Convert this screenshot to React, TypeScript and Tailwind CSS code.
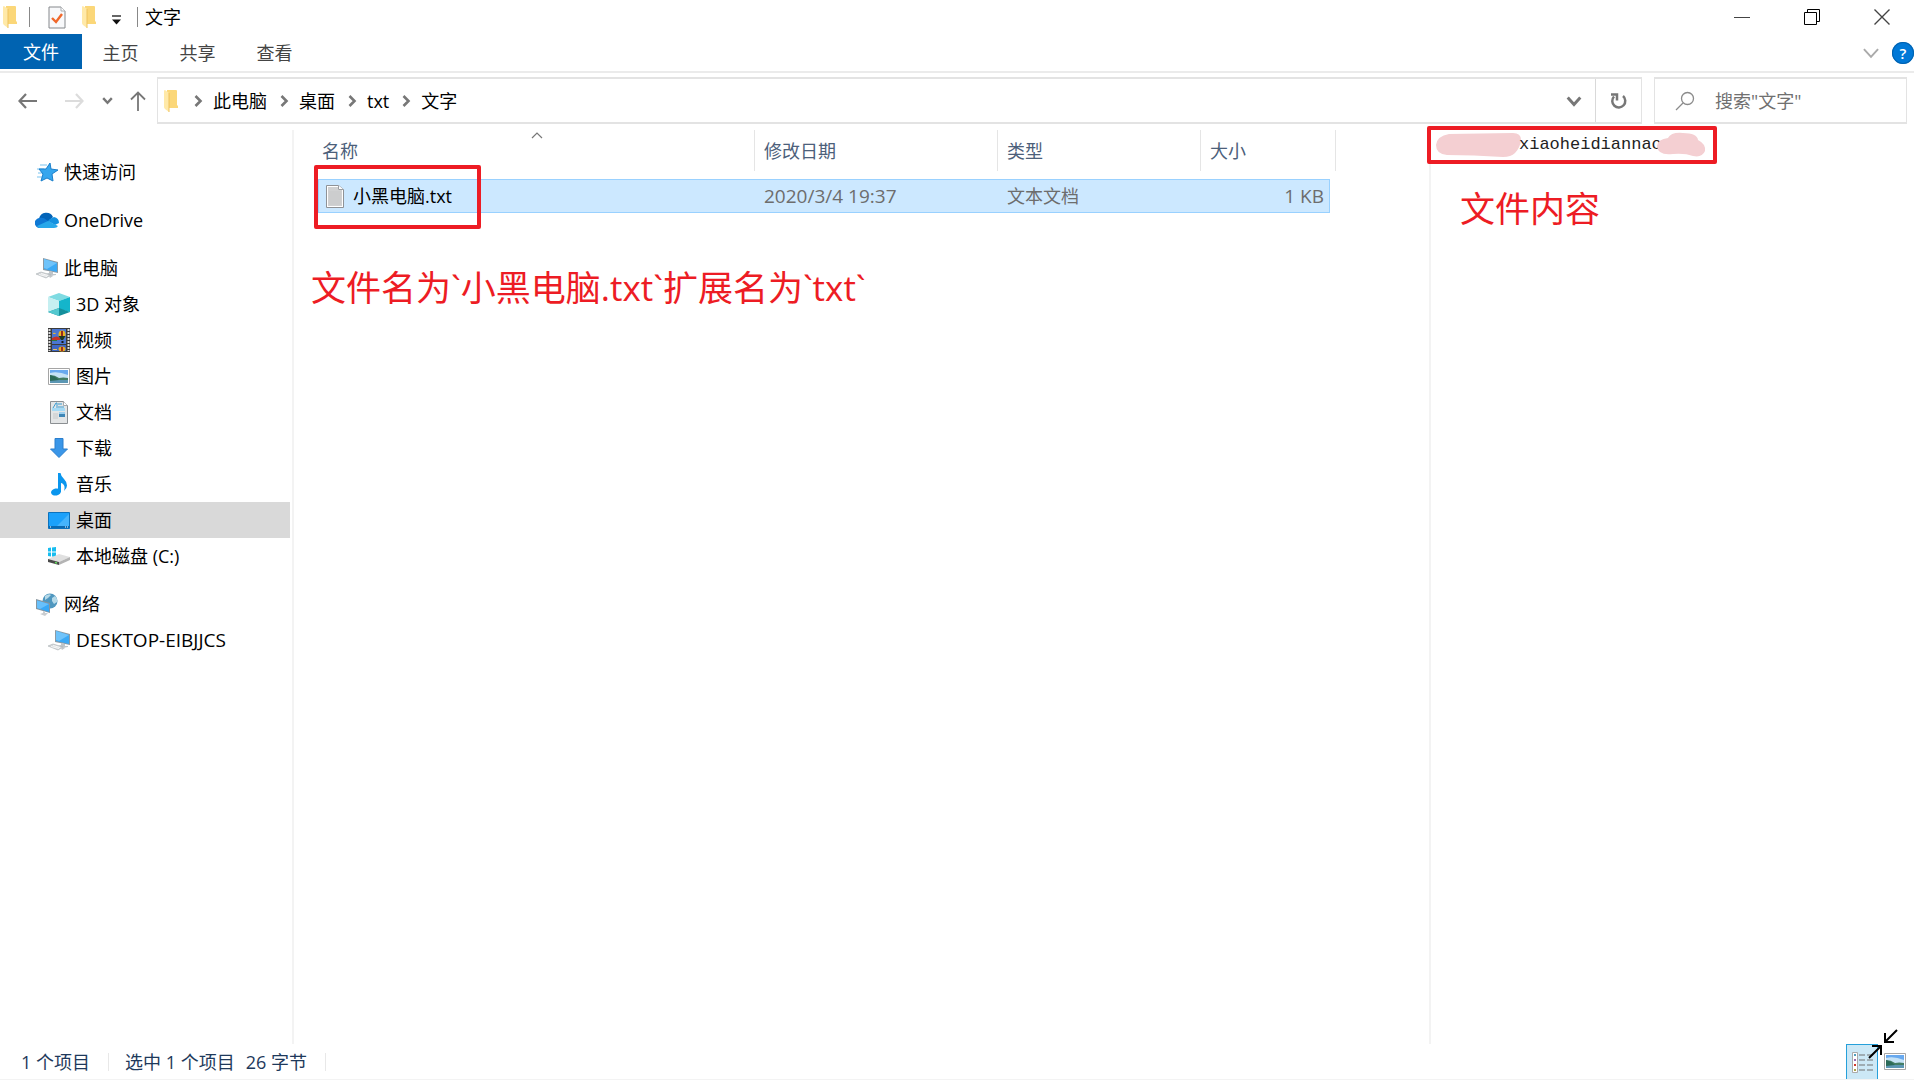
import type { ReactNode } from "react";

const LINE = "fill-none stroke-current";

function FolderIcon() {
  return (
    <svg width="16" height="24" viewBox="0 0 16 24" aria-hidden="true">
      <path d="M4 1h9q1 0 1 1v14l1 1v2H4z" fill="#fbd779" />
      <path d="M1 2q0-1 1-1l4 3v19l-4-3q-1-1-1-2z" fill="#ffe9a8" />
      <path d="M6 4v19" stroke="#eec25e" strokeWidth="1" />
    </svg>
  );
}

function CheckDocIcon() {
  return (
    <svg width="18" height="23" viewBox="0 0 18 23" aria-hidden="true">
      <path d="M1 1h12l4 4v17H1z" fill="#f8f9fb" stroke="#85888c" />
      <path d="M13 1v4h4" fill="#fff" stroke="#a9acb0" />
      <path d="M4 12l4 4 6-8" fill="none" stroke="#f0682b" strokeWidth="2.4" />
    </svg>
  );
}

function StarIcon() {
  return (
    <svg width="24" height="24" viewBox="0 0 24 24" aria-hidden="true">
      <path d="M5 5h7M2 9h7M3 13h6M2 17h6" stroke="#a6d8f5" strokeWidth="1.5" />
      <path d="M15 3l1 6 7 1-6 4 1 7-6-3-6 3 2-7-4-5h7z" fill="#35a6ee" stroke="#1b7fcb" />
    </svg>
  );
}

function CloudIcon() {
  return (
    <svg width="24" height="17" viewBox="0 0 24 17" aria-hidden="true">
      <path d="M5 16a5 5 0 0 1-1-9.500A7.500 7.500 0 0 1 18 5l-6 6z" fill="#0364b8" />
      <path d="M5 16a5 5 0 0 1-.5-10q4-1 7 2l5 3-9 5z" fill="#0f78d4" />
      <path d="M17 6a5 5 0 0 1 2-1q5 1 5 6l-4 2-7-4q1-2 4-3z" fill="#1490df" />
      <path d="M2 14l11-5q2 1 4 2l6 3q-1 2-4 2H5q-2 0-3-2z" fill="#28a8ea" />
    </svg>
  );
}

function ComputerIcon() {
  return (
    <svg width="24" height="22" viewBox="0 0 24 22" aria-hidden="true">
      <path d="M8 1l15 4v11L8 13z" fill="#8c9aa4" />
      <path d="M9 2l13 4v9L9 12z" fill="#3ba9f5" />
      <path d="M9 2l13 4-10 6-3-1z" fill="#6fc3fa" />
      <path d="M14 14l4 1v2h3v1l-6 1-4-2 3-1z" fill="#bfc5c9" />
      <path d="M1 17l5-2 10 3-5 3z" fill="#d5d8da" stroke="#aab0b4" strokeWidth=".6" />
      <path d="M4 17.500l8 2M6 16.500l7 2" stroke="#fff" strokeWidth=".8" />
      <path d="M14 19l3-1 1 1-3 2z" fill="#c2c6c9" />
    </svg>
  );
}

function CubeIcon() {
  return (
    <svg width="22" height="23" viewBox="0 0 22 23" aria-hidden="true">
      <path d="M11 0l11 4-11 4L0 4z" fill="#7fdbe2" />
      <path d="M0 4l11 4v10L0 19z" fill="#c5eff1" />
      <path d="M11 8l11-4v15l-11-3z" fill="#14b5cb" />
      <path d="M0 19l11-4 11 4-11 4z" fill="#148f9c" />
      <path d="M11 15v8L0 19z" fill="#53c8cf" />
    </svg>
  );
}

function FilmIcon() {
  return (
    <svg width="22" height="24" viewBox="0 0 22 24" aria-hidden="true">
      <path d="M0 0h22v24H0z" fill="#3b3b3b" />
      <path d="M1.500 1v22M20.500 1v22" stroke="#dcdcdc" strokeWidth="2" strokeDasharray="2 1" />
      <path d="M4 1h14v15H4z" fill="#4a76d2" />
      <path d="M4 17h14v6H4z" fill="#3d66c4" />
      <path d="M4 10q5-3 8 0v2H4z" fill="#c63226" />
      <path d="M4 12h5v1H4z" fill="#2c7a3c" />
      <path d="M5 5q2-1 3 1H5z" fill="#e7b23c" />
      <ellipse cx="14" cy="6.500" rx="3.500" ry="4" fill="#e8b520" />
      <path d="M13 3h2v7h-2z" fill="#9b2b1c" />
      <path d="M10.500 8h7L15 12h-2z" fill="#1d3822" />
      <path d="M13.500 13h2v2h-2z" fill="#151515" />
      <ellipse cx="14" cy="21" rx="3.500" ry="2.500" fill="#e7aa20" />
      <path d="M13 19h2v4h-2z" fill="#a12f1e" />
      <path d="M5 21h4v1H5z" fill="#e0be6b" />
    </svg>
  );
}

function PictureIcon() {
  return (
    <svg width="22" height="17" viewBox="0 0 22 17" aria-hidden="true">
      <path d="M.5.5h21v16H.5z" fill="#fff" stroke="#a5a5a5" />
      <path d="M2 2h18v13H2z" fill="#68a9ef" />
      <path d="M2 5q8-2 18 2v4H2z" fill="#c5e2f6" />
      <path d="M2 7q5 0 9 3 4-1 9 0v2H2z" fill="#437d65" />
      <path d="M2 12h18v3H2z" fill="#5b96b3" />
      <path d="M2 7q5 1 9 5l-9 1z" fill="#2b6a58" />
    </svg>
  );
}

function DocumentIcon() {
  return (
    <svg width="18" height="23" viewBox="0 0 18 23" aria-hidden="true">
      <path d="M.5.500h13l4 4v18H.5z" fill="#e3e5e6" stroke="#8b8f92" />
      <path d="M13.500.500v4h4" fill="#fff" stroke="#a5a9ac" />
      <path d="M3 7l3-5h1v5M8 3h4M8 6h6" stroke="#3a9bd0" fill="none" />
      <path d="M2 7h13v3H2z" fill="#a5daf5" />
      <path d="M9 11h6v5H9z" fill="#3f86b6" />
      <path d="M9 11h6v2H9z" fill="#9fd0ee" />
      <path d="M3 13h5M3 15h5M3 17h5" stroke="#c6c9cb" />
    </svg>
  );
}

function DownloadIcon() {
  return (
    <svg width="18" height="20" viewBox="0 0 18 20" aria-hidden="true">
      <path d="M5 .500h8V11h4.500L9 19.500.5 11H5z" fill="#3a96e8" stroke="#2b7fcd" />
    </svg>
  );
}

function MusicIcon() {
  return (
    <svg width="16" height="23" viewBox="0 0 16 23" aria-hidden="true">
      <ellipse cx="5" cy="19" rx="5" ry="3.500" fill="#0a96ee" transform="rotate(-12 5 19)" />
      <path d="M7 0h2.500q.5 3.500 3.500 6 3 3 3 6.500 0 3-3 5.500 1.500-5-1-7-1-1-2-1v9H7z" fill="#0a96ee" />
    </svg>
  );
}

function DesktopIcon() {
  return (
    <svg width="22" height="17" viewBox="0 0 22 17" aria-hidden="true">
      <path d="M.5.500h21v16H.5z" fill="#1ba1fb" stroke="#0c72bd" />
      <path d="M9 14L21 2v12z" fill="#46b4fc" />
      <path d="M1 15h20" stroke="#0b6ab2" strokeWidth="2" />
      <path d="M2 15h1M17 15h1M19 15h1" stroke="#fff" />
    </svg>
  );
}

function DriveIcon() {
  return (
    <svg width="22" height="18" viewBox="0 0 22 18" aria-hidden="true">
      <path d="M0 1l3-.5v4H0zM4 .500L8 0v4.500H4zM0 5.500h3v4L0 9zM4 5.500h4V10l-4-.5z" fill="#17bdf0" />
      <path d="M0 12l11-5 11 3-11 5z" fill="#e0e0e0" />
      <path d="M0 12l11 3v3L0 15z" fill="#4a4a4a" />
      <path d="M11 15l11-5v3l-11 5z" fill="#b4b4b4" />
      <path d="M7 15.500l2 .5" stroke="#65e05e" strokeWidth="1.500" />
    </svg>
  );
}

function NetworkIcon() {
  return (
    <svg width="22" height="23" viewBox="0 0 22 23" aria-hidden="true">
      <circle cx="14" cy="8" r="7.500" fill="#4f97bf" />
      <path d="M9 3q4-3 6-1l-3 3-3 2zM16 5l3-2q3 3 2 6l-3 2-2-3z" fill="#b5d9e8" />
      <path d="M0 6l14 4v10L0 16z" fill="#87959f" />
      <path d="M1 7.500L13 11v8L1 15z" fill="#39a8f6" />
      <path d="M1 7.500L13 11l-9 5-3-1z" fill="#68c0fb" />
      <path d="M7 18l2 1v1h3l-3 3-5-2 3-1z" fill="#cacdd0" />
    </svg>
  );
}

function TextFileIcon() {
  return (
    <svg width="18" height="23" viewBox="0 0 18 23" aria-hidden="true">
      <path d="M.5.500h12l5 4v18H.5z" fill="#fff" stroke="#8f9296" />
      <path d="M2 2h10v3h4v16H2z" fill="#d0d1d2" />
      <path d="M12.500.500v4h5" fill="#fff" stroke="#9b9ea2" />
      <path d="M3 7h12M3 9h12M3 11h12M3 13h12M3 15h12M3 17h12M3 19h12" stroke="#c4c6c8" strokeWidth=".6" />
    </svg>
  );
}

function Chevron({ dir, className }: { dir: "right" | "down"; className: string }) {
  return (
    <svg viewBox="0 0 14 14" className={`${LINE} ${className}`} aria-hidden="true">
      <path d={dir === "right" ? "M4.500 2L9.500 7l-5 5" : "M1.500 4L7 10l5.500-6"} />
    </svg>
  );
}

type NavItem = { label: string; icon: ReactNode; active?: boolean; latin?: boolean };
type NavGroup = { root: NavItem; children?: NavItem[] };

const groups: NavGroup[] = [
  { root: { label: "快速访问", icon: <StarIcon /> } },
  { root: { label: "OneDrive", icon: <CloudIcon /> } },
  {
    root: { label: "此电脑", icon: <ComputerIcon /> },
    children: [
      { label: "3D 对象", icon: <CubeIcon /> },
      { label: "视频", icon: <FilmIcon /> },
      { label: "图片", icon: <PictureIcon /> },
      { label: "文档", icon: <DocumentIcon /> },
      { label: "下载", icon: <DownloadIcon /> },
      { label: "音乐", icon: <MusicIcon /> },
      { label: "桌面", icon: <DesktopIcon />, active: true },
      { label: "本地磁盘 (C:)", icon: <DriveIcon /> },
    ],
  },
  {
    root: { label: "网络", icon: <NetworkIcon /> },
    children: [{ label: "DESKTOP-EIBJJCS", icon: <ComputerIcon />, latin: true }],
  },
];

const crumbs = ["此电脑", "桌面", "txt", "文字"];

function NavRow({ item, nested }: { item: NavItem; nested?: boolean }) {
  return (
    <li>
      <a
        href="#"
        className={`flex h-9 items-center gap-[5px] ${nested ? "pl-[47px]" : "pl-[35px]"} ${item.active ? "bg-[#d9d9d9]" : ""} ${item.latin ? "text-[19px]" : ""}`}
      >
        <span className="flex w-6 shrink-0 justify-center">{item.icon}</span>
        {item.label}
      </a>
    </li>
  );
}

function TitleBar() {
  return (
    <header className="flex h-[34px] items-center">
      <div className="flex items-center pl-[2px]">
        <FolderIcon />
        <span className="ml-[11px] h-5 w-px bg-[#888]" />
        <button className="ml-[18px]" aria-label="属性"><CheckDocIcon /></button>
        <button className="ml-[15px]" aria-label="新建文件夹"><FolderIcon /></button>
        <button className="ml-[15px] mt-[6px]" aria-label="自定义快速访问工具栏">
          <svg width="9" height="10" viewBox="0 0 9 10" aria-hidden="true">
            <path d="M0 1h9" stroke="#333" strokeWidth="1.500" />
            <path d="M0 4.500h9L4.500 9.500z" fill="#111" />
          </svg>
        </button>
        <span className="ml-4 h-5 w-px bg-[#888]" />
        <h1 className="ml-[7px]">文字</h1>
      </div>
      <div className="ml-auto flex gap-[6px] text-[#444]">
        <button className="flex h-8 w-16 items-center justify-center" aria-label="最小化">
          <svg width="16" height="16" className={LINE}><path d="M0 8.500h16" /></svg>
        </button>
        <button className="flex h-8 w-16 items-center justify-center text-black" aria-label="还原">
          <svg width="16" height="16" className={LINE}><path d="M.5 3.500h12v12H.5zM3.500 3.500v-3h12v12h-3" /></svg>
        </button>
        <button className="flex h-8 w-16 items-center justify-center" aria-label="关闭">
          <svg width="16" height="16" className={LINE}><path d="M.5.500l15 15M15.500.500l-15 15" strokeWidth="1.400" /></svg>
        </button>
      </div>
    </header>
  );
}

function Ribbon() {
  return (
    <nav className="flex h-[39px] items-start border-b-2 border-[#ebebeb] text-[#444]">
      <button className="h-[35px] w-[82px] bg-[#0063b1] text-white">文件</button>
      {["主页", "共享", "查看"].map((tab) => (
        <button key={tab} className="h-[37px] w-[77px]">{tab}</button>
      ))}
      <div className="ml-auto flex h-[37px] items-center gap-3">
        <button className="text-[#aaa]" aria-label="展开功能区">
          <Chevron dir="down" className="size-[18px] stroke-[1.5]" />
        </button>
        <button
          className="flex size-[22px] items-center justify-center rounded-full bg-[#0078d7] text-[15px] font-semibold text-white ring-1 ring-[#0063b1] ring-inset"
          aria-label="帮助"
        >
          ?
        </button>
      </div>
    </nav>
  );
}

function AddressBar() {
  return (
    <div className="flex h-[51px] items-stretch pt-1 pr-[7px]">
      <div className="flex w-[157px] shrink-0 items-center pl-[18px] text-[#777]">
        <button aria-label="后退">
          <svg width="20" height="16" className={LINE}><path d="M8 1L1.500 8 8 15M2 8h17" strokeWidth="2.200" /></svg>
        </button>
        <button className="ml-[26px] text-[#dcdcdc]" aria-label="前进">
          <svg width="20" height="16" className={LINE}><path d="M12 1l6.500 7-6.500 7M18 8H1" strokeWidth="2.200" /></svg>
        </button>
        <button className="ml-[18px]" aria-label="最近浏览的位置">
          <Chevron dir="down" className="size-[11px] stroke-3" />
        </button>
        <button className="ml-[17px]" aria-label="上移">
          <svg width="16" height="20" className={LINE}><path d="M1 8.500l7-7 7 7M8 2v18" strokeWidth="1.800" /></svg>
        </button>
      </div>
      <div className="flex flex-1 items-center border border-y-2 border-[#e3e3e3]">
        <div className="flex items-center pl-[5px]">
          <FolderIcon />
          <div className="flex items-center gap-[10px] pl-3">
            {crumbs.map((crumb) => (
              <span key={crumb} className="flex items-center gap-2">
                <Chevron dir="right" className="size-[14px] stroke-[2.6] text-[#777]" />
                <a href="#">{crumb}</a>
              </span>
            ))}
          </div>
        </div>
        <button className="ml-auto flex w-11 justify-center pl-[2px] text-[#777]" aria-label="历史记录">
          <Chevron dir="down" className="size-4 stroke-[2.6]" />
        </button>
        <button
          className="flex w-[46px] items-center justify-center self-stretch border-l border-[#d9d9d9] text-[#777]"
          aria-label="刷新"
        >
          <svg width="18" height="18" viewBox="0 0 18 18" className={LINE}>
            <path d="M4 4.500A6.500 6.500 0 1 0 13 4" strokeWidth="2.500" />
            <path d="M1 2.500h6v6" strokeWidth="2.500" />
          </svg>
        </button>
      </div>
      <label className="ml-3 flex w-[253px] items-center border border-y-2 border-[#e3e3e3] pl-5">
        <svg width="20" height="20" viewBox="0 0 20 20" className={`${LINE} shrink-0 text-[#8b8b8b]`}>
          <circle cx="12.500" cy="7.500" r="6" strokeWidth="1.300" />
          <path d="M8 12l-7 7" strokeWidth="1.300" />
        </svg>
        <input
          type="search"
          aria-label="搜索"
          placeholder={'搜索"文字"'}
          className="ml-5 min-w-0 flex-1 outline-none placeholder:text-[#707070]"
        />
      </label>
    </div>
  );
}

function FileTable() {
  const cell = "border-y border-[#99d1ff] bg-[#cce8ff] p-0 h-[34px]";
  const head = "flex h-[41px] items-center border-r border-[#e5e5e5]";
  return (
    <table className="w-full table-fixed border-separate border-spacing-0 text-left">
      <colgroup>
        <col />
        <col className="w-[243px]" />
        <col className="w-[203px]" />
        <col className="w-[129px]" />
        <col className="w-[6px]" />
      </colgroup>
      <thead className="text-[#4c607a]">
        <tr>
          <th className="relative p-0 pb-2 font-normal">
            <div className={`${head} pl-1`}>名称</div>
            <svg width="12" height="7" className={`${LINE} absolute top-[2px] left-1/2 -ml-[6px] text-[#777]`}>
              <path d="M1 6l5-5 5 5" strokeWidth="1.200" />
            </svg>
          </th>
          <th className="p-0 pb-2 font-normal"><div className={`${head} pl-[9px]`}>修改日期</div></th>
          <th className="p-0 pb-2 font-normal"><div className={`${head} pl-[9px]`}>类型</div></th>
          <th colSpan={2} className="p-0 pb-2 font-normal"><div className={`${head} pl-[9px]`}>大小</div></th>
        </tr>
      </thead>
      <tbody className="text-[#6d6d6d]">
        <tr>
          <td className={`${cell} relative border-l`}>
            <a href="#" className="flex items-center gap-[9px] pl-[7px] text-black">
              <TextFileIcon />
              小黑电脑.txt
            </a>
            <span className="absolute -top-[15px] -left-[5px] h-16 w-[167px] rounded-xs border-4 border-[#ed1c24]" />
          </td>
          <td className={`${cell} pl-[9px] text-[19px]`}>2020/3/4 19:37</td>
          <td className={`${cell} pl-[9px]`}>文本文档</td>
          <td className={`${cell} border-r pr-[5px] text-right text-[19px]`}>1 KB</td>
          <td className="p-0" />
        </tr>
      </tbody>
    </table>
  );
}

function PreviewPane() {
  return (
    <aside className="w-[485px] shrink-0 border-l-2 border-[#f3f3f3]" aria-label="预览">
      <div className="-mt-1 -ml-[4px] flex h-[38px] w-[290px] items-center rounded-xs border-4 border-[#ed1c24] bg-white pl-1">
        <svg width="86" height="24" viewBox="0 0 86 24" className="shrink-0" aria-hidden="true">
          <path d="M1 12Q2 3 14 1L78 0q8 0 8 7-1 8-6 13-4 4-12 4-30-2-56-2Q1 21 1 12z" fill="#f4cfd2" />
        </svg>
        <span className="-mr-[6px] -ml-[2px] font-['Liberation_Mono','Noto_Sans_CJK_SC',monospace] text-[17px] text-[#222]">
          xiaoheidiannao
        </span>
        <svg width="50" height="26" viewBox="0 0 50 26" className="relative shrink-0" aria-hidden="true">
          <path d="M1 14Q2 7 12 6 15 0 27 1q14 0 15 7 8 4 7 11-3 7-12 5-8-3-20-2Q2 24 1 14z" fill="#f4cfd2" />
        </svg>
      </div>
      <p className="pt-5 pl-[29px] text-[35px] leading-[50px] text-[#ed1c24]">文件内容</p>
    </aside>
  );
}

function StatusBar() {
  return (
    <footer className="relative flex h-[36px] items-center border-b border-[#f3f3f3] text-[#1e395b]">
      <span className="w-[108px] pl-[21px]">1 个项目</span>
      <span className="h-[18px] w-px bg-[#e8e8e8]" />
      <span className="pl-4">选中 1 个项目</span>
      <span className="pl-[11px]">26 字节</span>
      <span className="ml-[18px] h-[18px] w-px bg-[#e8e8e8]" />
      <div className="ml-auto flex items-center gap-[6px] self-stretch pr-2">
        <button
          className="flex w-8 items-center justify-center self-stretch border border-b-0 border-[#26a0da] bg-[#cce8f6]"
          aria-label="详细信息"
        >
          <svg width="21" height="21" viewBox="0 0 21 21" aria-hidden="true">
            <path d="M.5.500h5v20h-5z" fill="#fff" stroke="#aaa" />
            <path d="M3 2v2" stroke="#4f9fc0" strokeWidth="2" />
            <path d="M3 7v2" stroke="#9a6ab0" strokeWidth="2" />
            <path d="M3 12v2" stroke="#d03b2d" strokeWidth="2" />
            <path d="M3 17v2" stroke="#a9a44c" strokeWidth="2" />
            <path d="M7 3h6M15 3h6M7 8h6M15 8h6M7 13h6M15 13h6M7 18h6M15 18h6" stroke="#8f989d" strokeWidth="1.500" />
          </svg>
        </button>
        <button aria-label="大缩略图"><PictureIcon /></button>
      </div>
      <svg width="32" height="32" viewBox="0 0 32 32" className={`${LINE} absolute right-[15px] bottom-[19px] text-black`}>
        <path d="M30 2L18 14M18 5v9h9" strokeWidth="2" />
        <path d="M2 30l12-12M5 18h9v9" strokeWidth="2" />
      </svg>
    </footer>
  );
}

export default function App() {
  return (
    <div className="flex min-h-screen flex-col overflow-hidden bg-white font-['Open_Sans','Noto_Sans_CJK_SC',sans-serif] text-[18px] leading-6 text-black">
      <TitleBar />
      <Ribbon />
      <AddressBar />
      <div className="flex flex-1 pt-[6px]">
        <nav className="w-[290px] shrink-0 pt-6" aria-label="导航窗格">
          <ul className="flex flex-col gap-3">
            {groups.map(({ root, children }) => (
              <li key={root.label}>
                <ul>
                  <NavRow item={root} />
                  {children?.map((item) => <NavRow key={item.label} item={item} nested />)}
                </ul>
              </li>
            ))}
          </ul>
        </nav>
        <main className="ml-[2px] min-w-0 flex-1 border-l-2 border-[#f3f3f3] pr-[93px] pl-6">
          <FileTable />
          <p className="-ml-[7px] pt-[50px] text-[35px] leading-[50px] text-[#ed1c24]">
            文件名为`小黑电脑.txt`扩展名为`txt`
          </p>
        </main>
        <PreviewPane />
      </div>
      <StatusBar />
    </div>
  );
}
